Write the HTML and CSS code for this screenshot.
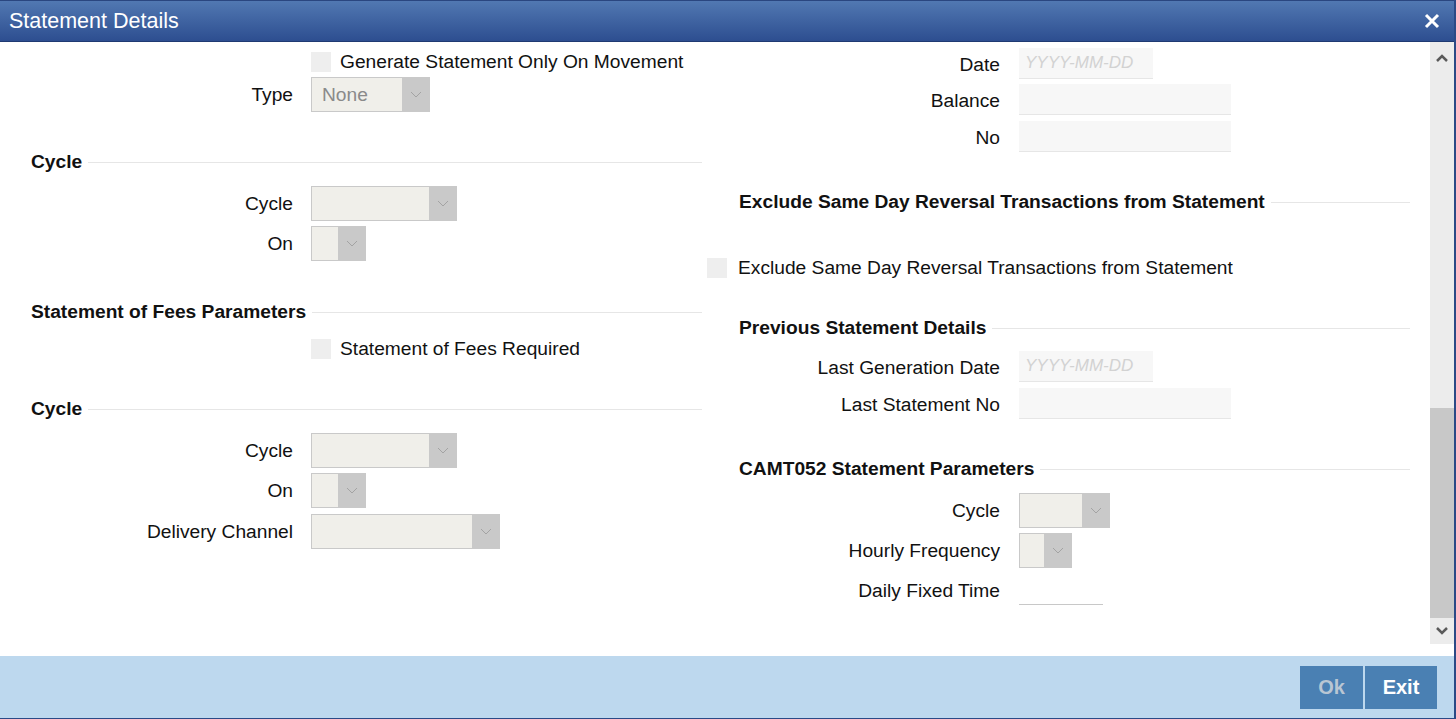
FILE: index.html
```html
<!DOCTYPE html>
<html>
<head>
<meta charset="utf-8">
<title>Statement Details</title>
<link rel="stylesheet" href="styles.css">
</head>
<body>
<div class="window">
  <header class="titlebar">
    <span class="title">Statement Details</span>
    <span class="close" aria-label="Close">
      <svg width="16" height="16" viewBox="0 0 16 16"><path d="M2 2L14 14M14 2L2 14" stroke="#ffffff" stroke-width="3" fill="none"/></svg>
    </span>
  </header>
  <main class="content">
    <div class="form">
      <section class="col col-left">
        <div class="row check-row mt10">
          <span class="checkbox"></span><span class="check-text">Generate Statement Only On Movement</span>
        </div>
        <div class="row mt5">
          <span class="lbl">Type</span>
          <div class="select w-type"><span class="val">None</span><span class="arrow"><svg width="12" height="7" viewBox="0 0 12 7"><path d="M1 1l5 5 5-5" fill="none" stroke="#a3a3a3" stroke-width="1"/></svg></span></div>
        </div>
        <div class="heading mt40">Cycle</div>
        <div class="row mt14">
          <span class="lbl">Cycle</span>
          <div class="select w-cycle"><span class="val"></span><span class="arrow"><svg width="12" height="7" viewBox="0 0 12 7"><path d="M1 1l5 5 5-5" fill="none" stroke="#a3a3a3" stroke-width="1"/></svg></span></div>
        </div>
        <div class="row mt5">
          <span class="lbl">On</span>
          <div class="select w-on"><span class="val"></span><span class="arrow"><svg width="12" height="7" viewBox="0 0 12 7"><path d="M1 1l5 5 5-5" fill="none" stroke="#a3a3a3" stroke-width="1"/></svg></span></div>
        </div>
        <div class="heading mt41">Statement of Fees Parameters</div>
        <div class="row check-row mt17">
          <span class="checkbox"></span><span class="check-text">Statement of Fees Required</span>
        </div>
        <div class="heading mt40">Cycle</div>
        <div class="row mt14">
          <span class="lbl">Cycle</span>
          <div class="select w-cycle"><span class="val"></span><span class="arrow"><svg width="12" height="7" viewBox="0 0 12 7"><path d="M1 1l5 5 5-5" fill="none" stroke="#a3a3a3" stroke-width="1"/></svg></span></div>
        </div>
        <div class="row mt5">
          <span class="lbl">On</span>
          <div class="select w-on"><span class="val"></span><span class="arrow"><svg width="12" height="7" viewBox="0 0 12 7"><path d="M1 1l5 5 5-5" fill="none" stroke="#a3a3a3" stroke-width="1"/></svg></span></div>
        </div>
        <div class="row mt6">
          <span class="lbl">Delivery Channel</span>
          <div class="select w-delivery"><span class="val"></span><span class="arrow"><svg width="12" height="7" viewBox="0 0 12 7"><path d="M1 1l5 5 5-5" fill="none" stroke="#a3a3a3" stroke-width="1"/></svg></span></div>
        </div>
      </section>

      <section class="col col-right">
        <div class="row row-input mt6">
          <span class="lbl">Date</span>
          <div class="input w-date"><span class="placeholder">YYYY-MM-DD</span></div>
        </div>
        <div class="row row-input mt5">
          <span class="lbl">Balance</span>
          <div class="input w-wide"></div>
        </div>
        <div class="row row-input mt6">
          <span class="lbl">No</span>
          <div class="input w-wide"></div>
        </div>
        <div class="heading mt40">Exclude Same Day Reversal Transactions from Statement</div>
        <div class="row check-row-right mt46">
          <span class="checkbox"></span><span class="check-text">Exclude Same Day Reversal Transactions from Statement</span>
        </div>
        <div class="heading mt40">Previous Statement Details</div>
        <div class="row row-input mt13">
          <span class="lbl">Last Generation Date</span>
          <div class="input w-date"><span class="placeholder">YYYY-MM-DD</span></div>
        </div>
        <div class="row row-input mt6">
          <span class="lbl">Last Statement No</span>
          <div class="input w-wide"></div>
        </div>
        <div class="heading mt40">CAMT052 Statement Parameters</div>
        <div class="row mt14">
          <span class="lbl">Cycle</span>
          <div class="select w-rcycle"><span class="val"></span><span class="arrow"><svg width="12" height="7" viewBox="0 0 12 7"><path d="M1 1l5 5 5-5" fill="none" stroke="#a3a3a3" stroke-width="1"/></svg></span></div>
        </div>
        <div class="row mt5">
          <span class="lbl">Hourly Frequency</span>
          <div class="select w-hourly"><span class="val"></span><span class="arrow"><svg width="12" height="7" viewBox="0 0 12 7"><path d="M1 1l5 5 5-5" fill="none" stroke="#a3a3a3" stroke-width="1"/></svg></span></div>
        </div>
        <div class="row row-input mt6">
          <span class="lbl">Daily Fixed Time</span>
          <div class="input-line"></div>
        </div>
      </section>
    </div>
    <div class="scrollbar">
      <div class="sb-up"><svg width="12" height="8" viewBox="0 0 12 8"><path d="M1 7l5-5 5 5" fill="none" stroke="#5a5a5a" stroke-width="2.5"/></svg></div>
      <div class="sb-track"></div>
      <div class="sb-thumb"></div>
      <div class="sb-down"><svg width="12" height="8" viewBox="0 0 12 8"><path d="M1 1l5 5 5-5" fill="none" stroke="#5a5a5a" stroke-width="2.5"/></svg></div>
    </div>
  </main>
  <footer class="footer">
    <button class="btn btn-ok">Ok</button>
    <button class="btn btn-exit">Exit</button>
  </footer>
</div>
</body>
</html>
```

FILE: styles.css
```css
* { box-sizing: border-box; }
html, body { margin: 0; padding: 0; }
body {
  font-family: "Liberation Sans", Arial, sans-serif;
  font-size: 19.2px;
  color: #111;
  background: #fff;
}
.window {
  width: 1456px;
  height: 719px;
  display: flex;
  flex-direction: column;
  border-right: 2px solid #2b4a86;
  overflow: hidden;
}
.titlebar {
  height: 42px;
  flex: none;
  display: flex;
  align-items: center;
  justify-content: space-between;
  padding: 0 14px 0 9px;
  background: linear-gradient(#5178b2, #2d4e90);
  border-top: 1px solid #2a4680;
  border-bottom: 1px solid #1f3a72;
}
.title { color: #fff; font-size: 21.5px; }
.close { display: flex; width: 16px; height: 16px; }

.content { flex: 1; display: flex; }
.form { width: 1428px; display: flex; }
.col-left { width: 702px; }
.col-right { width: 708px; }

.row { display: flex; align-items: center; }
.lbl { flex: none; width: 311px; padding-right: 18px; text-align: right; white-space: nowrap; }
.col-right .lbl { width: 317px; padding-right: 19px; }
.row-input .lbl { padding-top: 3px; }

.check-row { height: 20px; padding-left: 311px; white-space: nowrap; }
.check-row-right { height: 20px; padding-left: 5px; white-space: nowrap; }
.checkbox { flex: none; width: 20px; height: 20px; background: #eeeeee; }
.check-row .check-text { margin-left: 9px; }
.check-row-right .check-text { margin-left: 11px; }

.heading {
  display: flex;
  align-items: center;
  height: 20px;
  font-weight: bold;
  padding-left: 31px;
  white-space: nowrap;
}
.heading::after {
  content: "";
  flex: 1;
  height: 1px;
  background: #e6e6e6;
  margin-left: 6px;
}
.col-right .heading { padding-left: 37px; }

.select {
  display: flex;
  height: 35px;
  border: 1px solid #c9c9c9;
  background: #f0efea;
}
.select .val { flex: 1; padding-left: 10px; color: #8a8a8a; line-height: 33px; }
.select .arrow {
  flex: none;
  width: 27px;
  background: #c9c9c9;
  display: flex;
  align-items: center;
  justify-content: center;
}
.w-type { width: 119px; }
.w-cycle { width: 146px; }
.w-on { width: 55px; }
.w-delivery { width: 189px; }
.w-rcycle { width: 91px; }
.w-hourly { width: 53px; }

.input {
  height: 31px;
  background: #f7f7f7;
  border-bottom: 1px solid #e6e6e6;
  display: flex;
  align-items: center;
}
.w-date { width: 134px; }
.w-wide { width: 212px; }
.placeholder {
  padding-left: 6px;
  font-style: italic;
  font-size: 17px;
  color: #d2d2d2;
}
.input-line {
  width: 84px;
  height: 31px;
  border-bottom: 1px solid #c8c8c8;
}

.mt5 { margin-top: 5px; }
.mt6 { margin-top: 6px; }
.mt10 { margin-top: 10px; }
.mt13 { margin-top: 13px; }
.mt14 { margin-top: 14px; }
.mt17 { margin-top: 17px; }
.mt40 { margin-top: 40px; }
.mt41 { margin-top: 41px; }
.mt46 { margin-top: 46px; }

.scrollbar {
  flex: none;
  width: 24px;
  height: 602px;
  margin-left: 2px;
  background: #ececec;
  display: flex;
  flex-direction: column;
}
.sb-up { height: 32px; display: flex; align-items: center; justify-content: center; }
.sb-track { flex: 1; }
.sb-thumb { height: 210px; background: #c8c8c8; }
.sb-down { height: 26px; display: flex; align-items: center; justify-content: center; }

.footer {
  height: 63px;
  flex: none;
  background: #bdd8ee;
  border-bottom: 1px solid #2b4a86;
  display: flex;
  justify-content: flex-end;
  align-items: flex-start;
  gap: 2px;
  padding: 10px 17px 0 0;
}
.btn {
  height: 43px;
  border: none;
  background: #4a80b3;
  font-family: "Liberation Sans", Arial, sans-serif;
  font-size: 20px;
  font-weight: bold;
  padding: 0;
}
.btn-ok { width: 63px; color: #b9c6d3; }
.btn-exit { width: 72px; color: #ffffff; }
```
